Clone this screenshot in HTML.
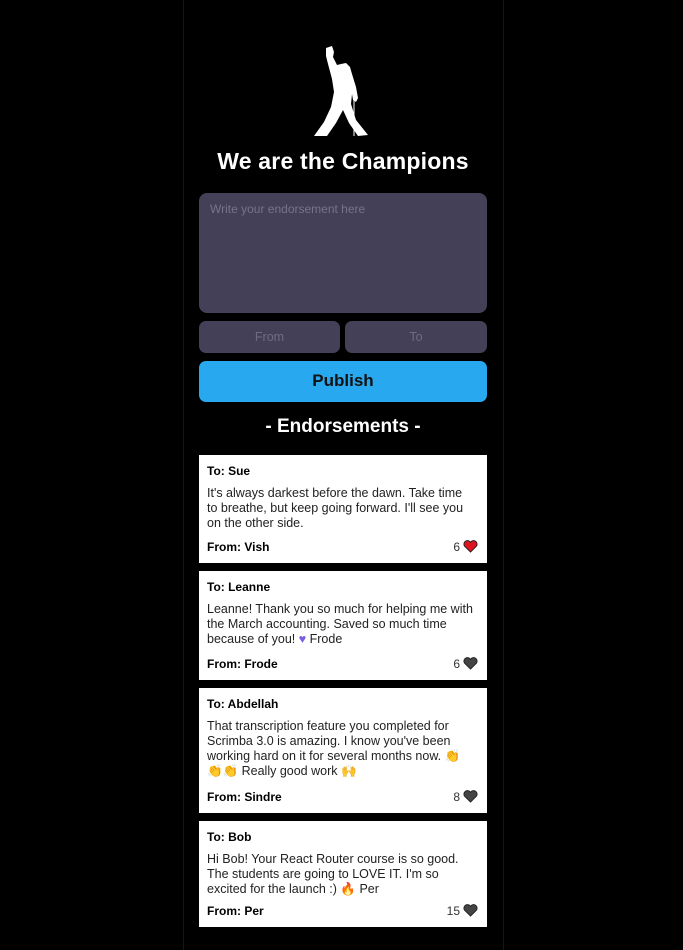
<!DOCTYPE html>
<html><head><meta charset="utf-8"><style>
body{margin:0;background:#000;width:683px;height:950px;overflow:hidden;font-family:"Liberation Sans",sans-serif}
.wrap{position:absolute;left:183px;top:0;width:319px;height:950px;border-left:1px solid #161616;border-right:1px solid #161616}
.abs{position:absolute}
h1{position:absolute;left:199px;width:288px;top:148px;margin:0;text-align:center;color:#fff;font-size:23px;font-weight:bold;letter-spacing:0.2px}
.ta{left:199px;top:193px;width:288px;height:120px;background:#444058;border-radius:8px}
.ta span{position:absolute;left:11px;top:9px;color:#77738a;font-size:12px}
.in{top:321px;height:32px;background:#444058;border-radius:7px;color:#6f6b82;font-size:12.5px;text-align:center;line-height:33px}
.btn{left:199px;top:361px;width:288px;height:41px;background:#28a8ef;border-radius:7px;text-align:center;line-height:39px;font-size:17px;font-weight:bold;color:#111}
.eh{left:199px;width:288px;top:416px;text-align:center;color:#fff;font-size:19px;font-weight:bold}
.card{left:199px;width:288px;background:#fff;box-sizing:border-box;padding:9px 8px 0 8px;font-size:12.5px;color:#222}
.card b{color:#000;font-size:12px}
.card p{margin:8px 0 0 0;line-height:15px;width:268px}
.ft{position:absolute;left:8px;right:9px;bottom:9px;font-size:12px}
.ft .l{font-weight:bold;color:#000}
.ft .r{position:absolute;right:0;top:0;color:#333}
.h{display:inline-block;vertical-align:-2px;margin-left:3px}
</style></head><body>
<div class="wrap"></div>
<svg class="abs" style="left:305px;top:42px" width="75" height="100" viewBox="0 0 75 100">
<path fill="#fff" d="M21 6L27 4L29 10L28 15L32 23L36 22L41 21L45 25L47 32L51 45L53 56L51 60L48 58L47 52L46 62L51 78L63 93L53 94L44 81L38 68L31 81L22 94L9 94L19 80L26 65L29 50L27 37L23 22L21 14Z"/>
<path stroke="#fff" stroke-width="1" d="M49 56v38"/>
</svg>
<h1>We are the Champions</h1>
<div class="abs ta"><span>Write your endorsement here</span></div>
<div class="abs in" style="left:199px;width:141px">From</div>
<div class="abs in" style="left:345px;width:142px">To</div>
<div class="abs btn">Publish</div>
<div class="abs eh">- Endorsements -</div>

<div class="abs card" style="top:455px;height:108px"><b>To: Sue</b><p>It's always darkest before the dawn. Take time to breathe, but keep going forward. I'll see you on the other side.</p>
<div class="ft"><span class="l">From: Vish</span><span class="r">6<svg class="h" width="15" height="13" viewBox="0 0 16 14"><path fill="#e0141e" stroke="#222" stroke-width="1" d="M8 13L1.5 6.5A3.5 3.5 0 018 2.5 3.5 3.5 0 0114.5 6.5z"/></svg></span></div></div>

<div class="abs card" style="top:571px;height:109px"><b>To: Leanne</b><p>Leanne! Thank you so much for helping me with the March accounting. Saved so much time because of you! <span style="color:#7a5ce0">♥</span> Frode</p>
<div class="ft"><span class="l">From: Frode</span><span class="r">6<svg class="h" width="15" height="13" viewBox="0 0 16 14"><path fill="#444" stroke="#222" stroke-width="1" d="M8 13L1.5 6.5A3.5 3.5 0 018 2.5 3.5 3.5 0 0114.5 6.5z"/></svg></span></div></div>

<div class="abs card" style="top:688px;height:125px"><b>To: Abdellah</b><p>That transcription feature you completed for Scrimba 3.0 is amazing. I know you've been working hard on it for several months now. <span style="color:#e8a820">👏<br>👏👏</span> Really good work <span style="color:#e8a820">🙌</span></p>
<div class="ft"><span class="l">From: Sindre</span><span class="r">8<svg class="h" width="15" height="13" viewBox="0 0 16 14"><path fill="#444" stroke="#222" stroke-width="1" d="M8 13L1.5 6.5A3.5 3.5 0 018 2.5 3.5 3.5 0 0114.5 6.5z"/></svg></span></div></div>

<div class="abs card" style="top:821px;height:106px"><b>To: Bob</b><p>Hi Bob! Your React Router course is so good. The students are going to LOVE IT. I'm so excited for the launch :) <span style="color:#f07020">🔥</span> Per</p>
<div class="ft"><span class="l">From: Per</span><span class="r">15<svg class="h" width="15" height="13" viewBox="0 0 16 14"><path fill="#444" stroke="#222" stroke-width="1" d="M8 13L1.5 6.5A3.5 3.5 0 018 2.5 3.5 3.5 0 0114.5 6.5z"/></svg></span></div></div>
</body></html>
